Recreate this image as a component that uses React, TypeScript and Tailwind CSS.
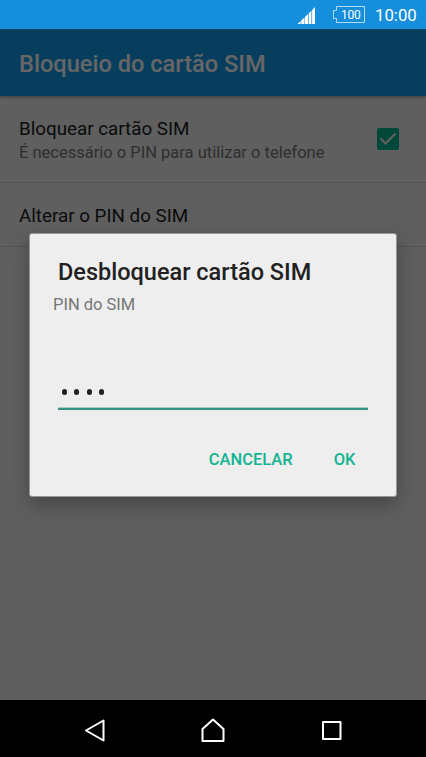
import React, { useState } from 'react';

const StatusBar = () => (
  <div className="flex h-[29px] shrink-0 items-center bg-[#158edb] text-white">
    <svg className="ml-[297px]" width="19" height="29" viewBox="0 0 19 29" fill="white">
      <path d="M0.5 24 L3.6 21 V24 Z" />
      <path d="M4.3 20.3 L7.5 17.5 V24 H4.3 Z" />
      <path d="M8 17 L11 14 V24 H8 Z" />
      <path d="M11.7 13.3 L14.4 10.8 V24 H11.7 Z" />
      <path d="M15.1 10 L18 7 V24 H15.1 Z" />
    </svg>
    <div className="relative ml-[16px] h-[29px] w-[33px]">
      <svg width="33" height="29" viewBox="0 0 33 29" fill="none" stroke="#b5daf4">
        <path d="M4.5 6.5 H32.5 V22.5 H4.5 V18.5 H1.5 V10.5 H4.5 Z" />
      </svg>
      <span className="absolute top-0 left-[9px] text-[12px] leading-[30px] tracking-[-0.2px]">100</span>
    </div>
    <span className="ml-[10px] pt-[2px] text-[16.8px] leading-[31px]">10:00</span>
  </div>
);

const NavigationBar = () => (
  <div className="flex h-[57px] shrink-0 items-center bg-black">
    <svg width="426" height="57" viewBox="0 0 426 57" fill="none" stroke="white" strokeWidth="2" strokeLinejoin="round">
      <path d="M103.5 20.5 V40.5 L86 30.5 Z" />
      <path d="M213 19.5 L223.5 29 V41 H202.5 V29 Z" />
      <path d="M323 22 H340.5 V39 H323 Z" />
    </svg>
  </div>
);

const Settings = () => (
  <div className="flex h-full flex-col bg-[#eeeeee]">
    <header className="z-10 flex h-[67px] shrink-0 items-center bg-[#149be8] pt-[4px] pl-[19px] shadow-[0_1px_3px_rgba(0,0,0,0.4)]">
      <h1 className="text-[23.6px] font-medium text-white">Bloqueio do cartão SIM</h1>
    </header>
    <div className="flex h-[87px] shrink-0 items-center border-b border-[#cfcfcf] pr-[27px] pl-[19px]">
      <div className="flex-1 pt-[3px]">
        <p className="text-[18.8px] leading-[25px] text-[#202020]">Bloquear cartão SIM</p>
        <p className="text-[16.5px] leading-[22px] text-[#757575]">É necessário o PIN para utilizar o telefone</p>
      </div>
      <svg width="22" height="22" viewBox="0 0 22 22">
        <rect width="22" height="22" rx="2" fill="#00b48e" />
        <path d="M3.5 10.5 L8.5 15.5 L18.5 5.5" fill="none" stroke="#eeeeee" strokeWidth="2.4" />
      </svg>
    </div>
    <div className="flex h-[64px] shrink-0 items-center border-b border-[#cfcfcf] px-[19px] pt-[3px]">
      <p className="text-[18.8px] leading-[25px] text-[#202020]">Alterar o PIN do SIM</p>
    </div>
  </div>
);

const UnlockDialog = ({ pin }: { pin: string }) => (
  <div className="absolute top-[204px] left-[29px] flex h-[264px] w-[368px] flex-col rounded-[3px] border border-[#969696] bg-[#eeeeee] shadow-[0_8px_20px_rgba(0,0,0,0.28)]">
    <h2 className="mt-[22px] ml-[28px] text-[23.5px] leading-[32px] font-medium text-[#212121]">Desbloquear cartão SIM</h2>
    <p className="mt-[5px] ml-[23px] text-[16.5px] leading-[23px] text-[#757575]">PIN do SIM</p>
    <div className="mx-[28px] mt-[58px] flex h-[36px] flex-col">
      <div className="flex flex-1 items-center gap-[7.6px] pt-[2px] pl-[3.7px]">
        {pin.split('').map((_, i) => (
          <span key={i} className="h-[6px] w-[5px] rounded-full bg-[#212121]" />
        ))}
      </div>
      <div className="h-[3px] border-t border-[#a9cdc5] bg-[#36917f]" />
    </div>
    <div className="mt-[37px] flex justify-end gap-[41px] pr-[40.5px] text-[16.5px] leading-[26px] font-medium text-[#12b491]">
      <button>CANCELAR</button>
      <button>OK</button>
    </div>
  </div>
);

const App = () => {
  const [pin] = useState('0000');

  return (
    <div className="flex h-[757px] w-[426px] flex-col overflow-hidden font-['Roboto',sans-serif]">
      <StatusBar />
      <main className="relative h-[671px] overflow-hidden">
        <Settings />
        <div className="absolute inset-0 z-20 bg-black/60">
          <UnlockDialog pin={pin} />
        </div>
      </main>
      <NavigationBar />
    </div>
  );
};

export default App;
